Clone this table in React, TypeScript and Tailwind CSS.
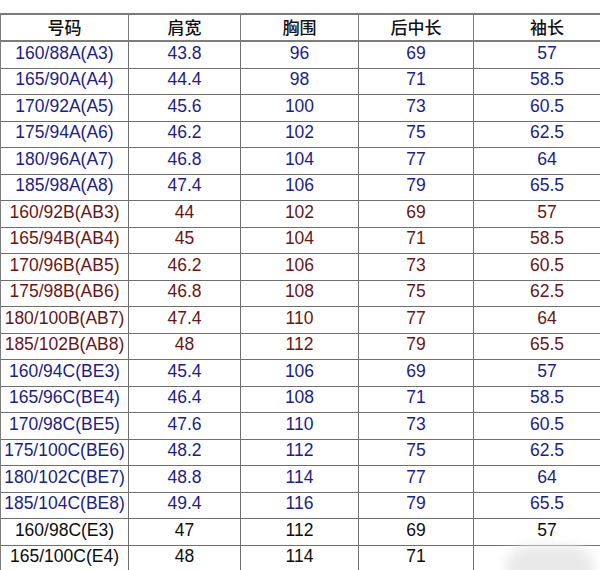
const BLUE = "text-[#1c1c8a]";
const RED = "text-[#6a1515]";
const BLACK = "text-[#0d0d0d]";

type Row = [string, string, string, string, string, string];

const rows: Row[] = [
  ["160/88A(A3)", "43.8", "96", "69", "57", BLUE],
  ["165/90A(A4)", "44.4", "98", "71", "58.5", BLUE],
  ["170/92A(A5)", "45.6", "100", "73", "60.5", BLUE],
  ["175/94A(A6)", "46.2", "102", "75", "62.5", BLUE],
  ["180/96A(A7)", "46.8", "104", "77", "64", BLUE],
  ["185/98A(A8)", "47.4", "106", "79", "65.5", BLUE],
  ["160/92B(AB3)", "44", "102", "69", "57", RED],
  ["165/94B(AB4)", "45", "104", "71", "58.5", RED],
  ["170/96B(AB5)", "46.2", "106", "73", "60.5", RED],
  ["175/98B(AB6)", "46.8", "108", "75", "62.5", RED],
  ["180/100B(AB7)", "47.4", "110", "77", "64", RED],
  ["185/102B(AB8)", "48", "112", "79", "65.5", RED],
  ["160/94C(BE3)", "45.4", "106", "69", "57", BLUE],
  ["165/96C(BE4)", "46.4", "108", "71", "58.5", BLUE],
  ["170/98C(BE5)", "47.6", "110", "73", "60.5", BLUE],
  ["175/100C(BE6)", "48.2", "112", "75", "62.5", BLUE],
  ["180/102C(BE7)", "48.8", "114", "77", "64", BLUE],
  ["185/104C(BE8)", "49.4", "116", "79", "65.5", BLUE],
  ["160/98C(E3)", "47", "112", "69", "57", BLACK],
  ["165/100C(E4)", "48", "114", "71", "", BLACK],
];

const headers = ["号码", "肩宽", "胸围", "后中长", "袖长"];

export default function App() {
  return (
    <div
      className="w-[600px] h-[570px] overflow-hidden bg-white pt-[13px] relative"
      style={{ fontFamily: '"Liberation Sans", "Noto Sans CJK SC", Arial, sans-serif' }}
    >
      <div className="grid grid-cols-[128px_112px_118px_115px_1fr] w-[620px] border-t-2 border-l border-[#7c7c7c] text-[17.5px] leading-none">
        {headers.map((h, i) => (
          <div
            key={h}
            className={`h-[27px] flex items-center justify-center pb-[2px] border-b-2 border-[#7c7c7c] ${i < 4 ? "border-r" : ""} text-[#111111] text-[17px] font-medium`}
            style={{ fontFamily: '"Noto Sans CJK SC", "Liberation Sans", sans-serif' }}
          >
            {h}
          </div>
        ))}
        {rows.map((r) =>
          r.slice(0, 5).map((cell, i) => (
            <div
              key={r[0] + i}
              className={`h-[26.5px] flex items-center justify-center pb-[3px] border-b border-[#6f6f6f] ${i < 4 ? "border-r" : ""} ${r[5]}`}
            >
              {cell}
            </div>
          ))
        )}
      </div>
      {/* blurred smudge over the last cell */}
      <div className="absolute left-[506px] top-[546px] w-[88px] h-[44px] rounded-full bg-[#e9e9e9] blur-[6px]" />
    </div>
  );
}
